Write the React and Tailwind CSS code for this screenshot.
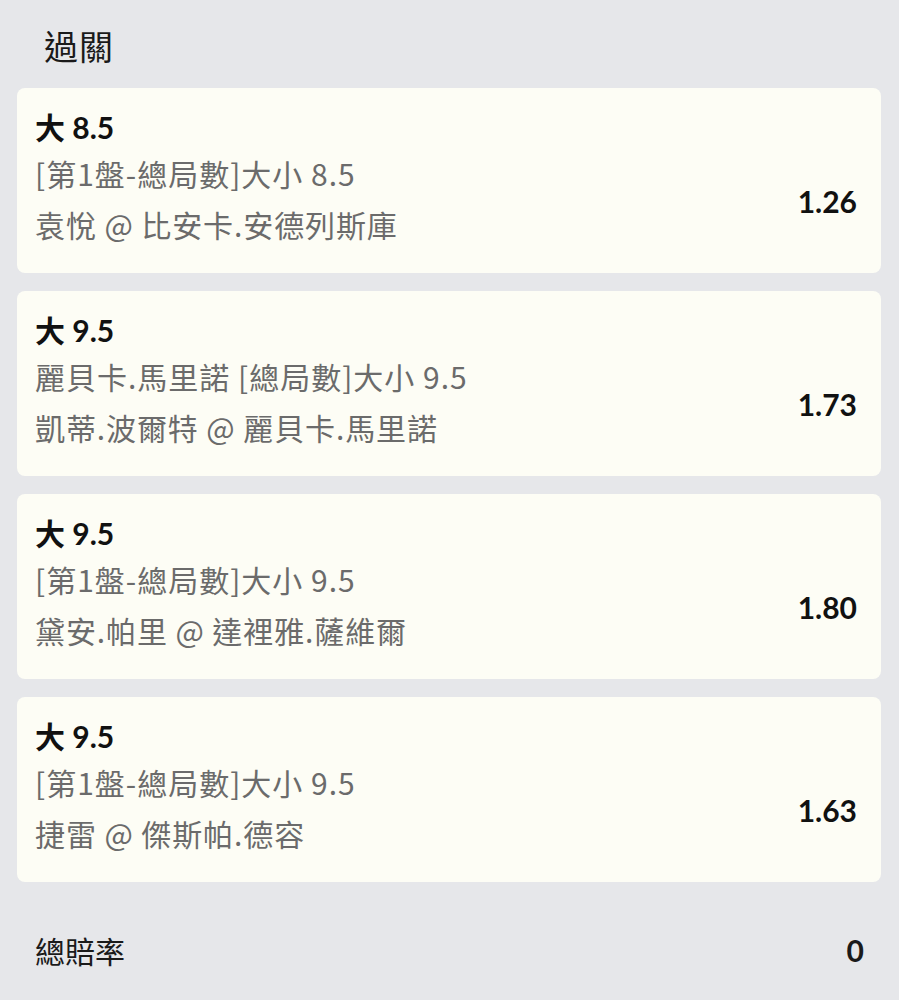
import React from "react";

const bets = [
  { title: "大 8.5", market: "[第1盤-總局數]大小 8.5", match: "袁悅 @ 比安卡.安德列斯庫", odds: "1.26" },
  { title: "大 9.5", market: "麗貝卡.馬里諾 [總局數]大小 9.5", match: "凱蒂.波爾特 @ 麗貝卡.馬里諾", odds: "1.73" },
  { title: "大 9.5", market: "[第1盤-總局數]大小 9.5", match: "黛安.帕里 @ 達裡雅.薩維爾", odds: "1.80" },
  { title: "大 9.5", market: "[第1盤-總局數]大小 9.5", match: "捷雷 @ 傑斯帕.德容", odds: "1.63" },
];

export default function App() {
  return (
    <div className="w-[899px] h-[1000px] bg-[#e6e7ea] overflow-hidden font-['Noto_Sans_CJK_TC','Noto_Sans',sans-serif]">
      <div className="h-[88px] pl-[44px] pt-[22px] text-[34px] leading-[48px] tracking-[1px] text-[#1a1a1a]">
        過關
      </div>
      <div className="flex flex-col gap-[18px] pl-[17px] pr-[18px]">
        {bets.map((b, i) => (
          <div key={i} className="h-[185px] rounded-[8px] bg-[#fdfdf5] pl-[18px] pr-[24px] pt-[18px] flex items-start justify-between">
            <div className="flex flex-col">
              <div className="text-[30px] leading-[42px] font-bold text-[#111] font-['Lato','Noto_Sans_CJK_TC',sans-serif]">{b.title}</div>
              <div className="text-[30px] leading-[50px] tracking-[1px] text-[#6b6b6b]">{b.market}</div>
              <div className="text-[30px] leading-[52px] tracking-[0.9px] text-[#6b6b6b]">{b.match}</div>
            </div>
            <div className="pt-[75px] text-[30px] leading-[40px] font-bold text-[#111] font-['Lato',sans-serif]">{b.odds}</div>
          </div>
        ))}
      </div>
      <div className="flex items-center justify-between pl-[35px] pr-[35px] pt-[43px] text-[30px] leading-[50px] text-[#1a1a1a]">
        <span>總賠率</span>
        <span className="font-bold font-['Lato',sans-serif]">0</span>
      </div>
    </div>
  );
}
